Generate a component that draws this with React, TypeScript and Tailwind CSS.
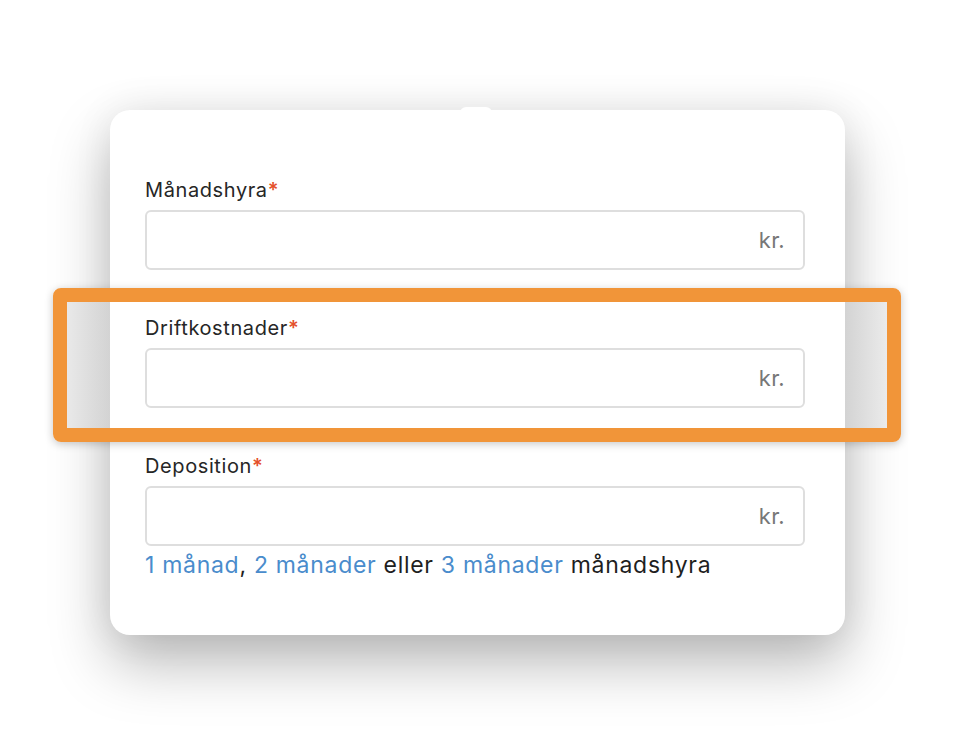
import React from "react";

const Field = ({ label }: { label: string }) => (
  <div className="flex flex-col">
    <div className="text-[20px] leading-[24px] tracking-[0.6px] text-[#262626] h-[24px]">
      {label}
      <span className="text-[#e4502a] font-semibold">*</span>
    </div>
    <div className="mt-[8px] h-[60px] rounded-[6px] border-2 border-[#dedede] bg-white flex items-center justify-end pr-[18px]">
      <span className="text-[22px] tracking-[0.3px] text-[#777777]">kr.</span>
    </div>
  </div>
);

export default function App() {
  return (
    <div
      className="relative w-[956px] h-[746px] bg-white overflow-hidden pt-[110px] pl-[110px]"
      style={{ fontFamily: "Inter, 'Noto Sans', 'Liberation Sans', sans-serif" }}
    >
      <div className="relative w-[735px] h-[525px] bg-white rounded-[20px] shadow-[0_28px_60px_rgba(0,0,0,0.28),0_0_40px_rgba(0,0,0,0.07)] pt-[68px] pl-[35px] pr-[40px]">
        <div className="absolute top-[-3px] left-[350px] w-[32px] h-[6px] bg-white rounded-t-[6px]" />
        <div className="flex flex-col gap-[46px]">
          <Field label="Månadshyra" />
          <Field label="Driftkostnader" />
          <div className="flex flex-col">
            <Field label="Deposition" />
            <div className="mt-[6px] text-[23px] leading-[26px] tracking-[0.7px] text-[#1f1f1f]">
              <span className="text-[#4a8ccc]">1 månad</span>,{" "}
              <span className="text-[#4a8ccc]">2 månader</span> eller{" "}
              <span className="text-[#4a8ccc]">3 månader</span> månadshyra
            </div>
          </div>
        </div>
      </div>
      <div className="absolute left-[53px] top-[288px] w-[848px] h-[154px] rounded-[8px] border-[14px] border-[#f19539] shadow-[0_2px_8px_rgba(0,0,0,0.22)] overflow-hidden">
        <div className="absolute left-0 top-0 bottom-0 w-[43px] bg-gradient-to-r from-[#e9e9e9] to-[#d3d3d3]" />
        <div className="absolute right-0 top-0 bottom-0 w-[42px] bg-gradient-to-l from-[#ebebeb] to-[#d3d3d3]" />
      </div>
    </div>
  );
}
